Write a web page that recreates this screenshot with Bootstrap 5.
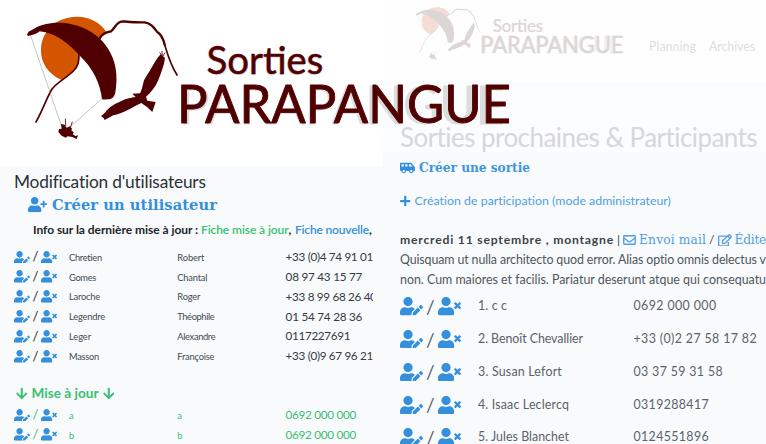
<!DOCTYPE html>
<html lang="fr">
<head>
<meta charset="utf-8">
<meta name="viewport" content="width=device-width, initial-scale=1">
<title>Sorties Parapangue</title>
<link href="https://cdn.jsdelivr.net/npm/bootstrap@5.3.0/dist/css/bootstrap.min.css" rel="stylesheet">
<style>
  body { width: 766px; height: 444px; background: #f8fafc; color: #212529; font-family: Lato, "Noto Sans", sans-serif; line-height: 1; }
  svg { display: block; flex: none; }
  a, .tint { color: #3490dc; }
  .leaf { color: #38c172; }
  .slab { font-family: "DejaVu Serif", serif; }
  .admin { width: 383px; }
  .admin-top { height: 166px; }
  .admin-body { width: 372.5px; padding-left: 14px; }
  .admin-title { height: 31px; padding-top: 2px; font-size: 17.3px; font-weight: 400; color: #2b3035; }
  .admin-new { height: 16px; padding-left: 14px; font-size: 14.6px; gap: 5px; }
  .admin-info { height: 34px; padding-left: 19px; font-size: 12px; font-weight: 700; }
  .admin-info a, .admin-info .leaf { font-weight: 600; }
  .person { height: 19.85px; }
  .person .tools { width: 55px; font-size: 13px; gap: 2.5px; }
  .person .name { width: 108.3px; padding-top: 1px; font-size: 9.3px; color: #444a50; }
  .person .phone { font-size: 11.7px; color: #343a40; }
  .person .name.leaf, .person .phone.leaf { color: #38c172; }
  .admin-sub { height: 24px; margin: 15px 0 0; padding-left: 2px; font-size: 13.6px; font-weight: 700; gap: 4px; }
  .trips { width: 383px; }
  .trips-top { height: 82px; background: #fefefe; color: #dddfe0; font-size: 12.4px; }
  .trips-top nav { padding: 41px 11px 0 0; gap: 13px; }
  .trips-hero { height: 70px; background: #fbfcfd; padding: 41px 0 0 17px; }
  .trips-hero h2 { font-size: 26px; font-weight: 400; color: #d5d7d9; line-height: 28px; }
  .trips-body { padding-left: 17px; }
  .trips-body a { color: #4f9fe1; }
  .trips-body .trips-new a { color: #3f95de; }
  .trips-new { height: 32px; font-size: 12.2px; }
  .trips-add { height: 34px; font-size: 12.3px; }
  .trips-date { height: 40px; padding-top: 4px; font-size: 12.2px; color: #3d4246; gap: 3px; }
  .trips-date a { gap: 3px; }
  .trips-text { font-size: 12.4px; line-height: 19.5px; color: #50565b; margin-top: -8px; height: 40px; }
  .guest { height: 32.8px; font-size: 12.4px; color: #5c6268; }
  .guest .tools { width: 78px; font-size: 19px; gap: 3px; }
  .guest .name { width: 155.5px; }
  .brand { left: 0; top: 0; z-index: 2; --ink: #500000; --sun: #d45500; --line: #888; --cast: #dcdcdc; }
  .brand-faded { left: 21.4px; top: 0; --ink: #dcd7d6; --sun: #f5dcd7; --line: #e6e6e6; --cast: #f0efef; }
</style>
<script src="https://cdn.jsdelivr.net/npm/bootstrap@5.3.0/dist/js/bootstrap.bundle.min.js"></script>
</head>
<body class="overflow-hidden position-relative m-0">

<svg width="0" height="0" class="position-absolute">
  <defs>
    <symbol id="i-edit-user" viewBox="0 0 640 512"><path fill="currentColor" d="M224 256c70.7 0 128-57.3 128-128S294.7 0 224 0 96 57.3 96 128s57.3 128 128 128zm89.6 32h-16.7c-22.2 10.2-46.9 16-72.9 16s-50.6-5.8-72.9-16h-16.7C60.2 288 0 348.2 0 422.4V464c0 26.5 21.5 48 48 48h274.9c-2.4-6.8-3.4-14-2.6-21.3l6.8-60.9 1.2-11.1 7.9-7.9 77.3-77.3c-24.5-27.7-60-45.5-99.9-45.5zm45.3 145.3l-6.8 61c-1.1 10.2 7.5 18.8 17.6 17.6l60.9-6.8 137.9-137.9-71.7-71.7-137.9 137.8zM633 268.9L595.1 231c-9.3-9.3-24.5-9.3-33.8 0l-37.8 37.8-4.1 4.1 71.8 71.7 41.8-41.8c9.3-9.4 9.3-24.5 0-33.9z"/></symbol>
    <symbol id="i-drop-user" viewBox="0 0 640 512"><path fill="currentColor" d="M589.6 240l45.6-45.6c6.3-6.3 6.3-16.5 0-22.8l-22.8-22.8c-6.3-6.3-16.5-6.3-22.8 0L544 194.4l-45.6-45.6c-6.3-6.3-16.5-6.3-22.8 0l-22.8 22.8c-6.3 6.3-6.3 16.5 0 22.8l45.6 45.6-45.6 45.6c-6.3 6.3-6.3 16.5 0 22.8l22.8 22.8c6.3 6.3 16.5 6.3 22.8 0l45.6-45.6 45.6 45.6c6.3 6.3 16.5 6.3 22.8 0l22.8-22.8c6.3-6.3 6.3-16.5 0-22.8L589.6 240zM224 256c70.7 0 128-57.3 128-128S294.7 0 224 0 96 57.3 96 128s57.3 128 128 128zm89.6 32h-16.7c-22.2 10.2-46.9 16-72.9 16s-50.6-5.8-72.9-16h-16.7C60.2 288 0 348.2 0 422.4V464c0 26.5 21.5 48 48 48h352c26.5 0 48-21.5 48-48v-41.6c0-74.2-60.2-134.4-134.4-134.4z"/></symbol>
    <symbol id="i-add-user" viewBox="0 0 640 512"><path fill="currentColor" d="M624 208h-64v-64c0-8.8-7.2-16-16-16h-32c-8.8 0-16 7.2-16 16v64h-64c-8.8 0-16 7.2-16 16v32c0 8.8 7.2 16 16 16h64v64c0 8.8 7.2 16 16 16h32c8.8 0 16-7.2 16-16v-64h64c8.8 0 16-7.2 16-16v-32c0-8.8-7.2-16-16-16zm-400 48c70.7 0 128-57.3 128-128S294.7 0 224 0 96 57.3 96 128s57.3 128 128 128zm89.6 32h-16.7c-22.2 10.2-46.9 16-72.9 16s-50.6-5.8-72.9-16h-16.7C60.2 288 0 348.2 0 422.4V464c0 26.5 21.5 48 48 48h352c26.5 0 48-21.5 48-48v-41.6c0-74.2-60.2-134.4-134.4-134.4z"/></symbol>
    <symbol id="i-down" viewBox="0 0 448 512"><path fill="currentColor" d="M413.1 222.5l22.2 22.2c9.4 9.4 9.4 24.6 0 33.9L241 473c-9.4 9.4-24.6 9.4-33.9 0L12.7 278.6c-9.4-9.4-9.4-24.6 0-33.9l22.2-22.2c9.5-9.5 25-9.3 34.3.4L184 343.4V56c0-13.3 10.7-24 24-24h32c13.3 0 24 10.7 24 24v287.4l114.8-120.5c9.3-9.8 24.8-10 34.3-.4z"/></symbol>
    <symbol id="i-plus" viewBox="0 0 448 512"><path fill="currentColor" d="M416 208H272V64c0-17.7-14.3-32-32-32h-32c-17.7 0-32 14.3-32 32v144H32c-17.7 0-32 14.3-32 32v32c0 17.7 14.3 32 32 32h144v144c0 17.7 14.3 32 32 32h32c17.7 0 32-14.3 32-32V304h144c17.7 0 32-14.3 32-32v-32c0-17.7-14.3-32-32-32z"/></symbol>
    <symbol id="i-van" viewBox="0 0 640 512"><path fill="currentColor" d="M628.88 210.65L494.39 49.27A48.01 48.01 0 0 0 457.52 32H32C14.33 32 0 46.33 0 64v288c0 17.67 14.33 32 32 32h32c0 53.02 42.98 96 96 96s96-42.98 96-96h128c0 53.02 42.98 96 96 96s96-42.98 96-96h32c17.67 0 32-14.33 32-32V241.38c0-11.23-3.94-22.1-11.12-30.73zM64 192V96h96v96H64zm96 240c-26.51 0-48-21.49-48-48s21.49-48 48-48 48 21.49 48 48-21.49 48-48 48zm160-240h-96V96h96v96zm160 240c-26.51 0-48-21.49-48-48s21.49-48 48-48 48 21.49 48 48-21.49 48-48 48zm-96-240V96h66.02l80 96H384z"/></symbol>
    <symbol id="i-mail" viewBox="0 0 26 20"><g fill="none" stroke="currentColor" stroke-width="2.8" stroke-linejoin="round"><rect x="1.5" y="1.5" width="23" height="17" rx="1.5"/><path d="M2 6l9 7q2 1.5 4 0l9-7"/></g></symbol>
    <symbol id="i-pen" viewBox="0 0 576 512"><g fill="none" stroke="currentColor" stroke-width="54" stroke-linejoin="round" stroke-linecap="round"><path d="M340 90H50q-22 0-22 26v346q0 22 22 22h348q26 0 26-26V340"/><path d="M190 280L440 40q20-18 40 0l56 56q18 20 0 40L296 376l-110 14zM400 75l100 100"/></g></symbol>
    <symbol id="logo" viewBox="0 0 520 150">
      <g transform="scale(.33333)">
        <path fill="var(--sun)" d="M185 240C146 223 122 190 123 150C124 91 171 50 231 50C267 50 300 67 318 94L300 115L236 165Q238 193 222 213Z"/>
        <g fill="none" stroke="var(--ink)" stroke-linecap="round" stroke-linejoin="round">
          <path stroke-width="7" d="M300 114C308 98 321 97 333 94C347 83 348 65 368 64C393 66 415 68 434 67C455 71 462 83 471 95C487 105 491 120 494 134"/>
          <path stroke-width="5" d="M494 134C503 163 510 191 531 225"/>
          <path stroke-width="5" d="M237 163C237 182 236 198 220 213C200 234 176 243 156 267C138 298 129 329 108 366"/>
        </g>
        <path fill="none" stroke="var(--line)" stroke-width="1.5" d="M91 104L185 380M307 295L214 377"/>
        <g fill="var(--ink)">
          <path d="M81 104Q84 94 94 91C123 71 158 66 192 69C263 76 316 117 338 173C351 207 352 242 346 277C342 298 330 300 306 298C301 248 277 203 240 168C203 128 164 98 119 94Q109 104 84 108Z"/>
          <path d="M482 163L495 174C493 194 484 216 475 240C466 262 452 278 438 290L442 302L467 306L457 336L442 322L424 309C399 320 368 342 340 346L314 360L310 353L303 349L316 337C325 322 344 312 364 303C380 295 394 292 407 291L397 281L420 280C430 262 427 245 438 230C451 212 460 192 474 172Z"/>
          <path d="M183 372L194 374L200 383L210 379L216 386L214 391L222 398L218 402L226 408L235 406L229 417L217 411L203 409L197 413L185 407L175 396L177 387L185 386Z"/>
        </g>
        <path fill="none" stroke="var(--ink)" stroke-width="2.5" d="M479 157L487 170L486 153M495 158L488 170M196 356L197 378M217 365L211 384"/>
      </g>
      <g font-family="Lato, sans-serif" font-weight="400" stroke-linejoin="round">
        <g fill="var(--cast)" stroke="var(--cast)" stroke-width=".5"><text x="208" y="75" font-size="38.5" textLength="114" lengthAdjust="spacingAndGlyphs">Sorties</text><text x="179.5" y="124" font-size="51.5" stroke-width=".9" textLength="325" lengthAdjust="spacingAndGlyphs">PARAPANGUE</text></g>
        <g fill="var(--ink)" stroke="var(--ink)" stroke-width=".5"><text x="206.5" y="73.5" font-size="38.5" textLength="117" lengthAdjust="spacingAndGlyphs">Sorties</text><text x="177" y="122.9" font-size="51.5" stroke-width=".9" textLength="334" lengthAdjust="spacingAndGlyphs">PARAPANGUE</text></g>
      </g>
    </symbol>
  </defs>
</svg>

<svg class="brand position-absolute" width="520" height="150"><use href="#logo"/></svg>

<main class="d-flex h-100">
  <section class="admin flex-shrink-0">
    <div class="admin-top bg-white"></div>
    <div class="admin-body overflow-hidden text-nowrap">
      <h1 class="admin-title d-flex align-items-center m-0"><span data-w="192">Modification d'utilisateurs</span></h1>
      <div class="admin-new tint d-flex align-items-center fw-bold">
        <svg width="19" height="15.2"><use href="#i-add-user"/></svg>
        <a href="#" class="slab text-decoration-none" data-w="165">Créer un utilisateur</a>
      </div>
      <div class="admin-info d-flex align-items-center"><span data-w="168">Info sur la dernière mise à jour :&nbsp;</span><span class="leaf" data-w="87.5">Fiche mise à jour</span><span data-w="6.5">,&nbsp;</span><a href="#" class="text-decoration-none" data-w="74">Fiche nouvelle</a><span>,</span></div>
      <div id="users"></div>
      <h2 class="admin-sub leaf d-flex align-items-center"><svg width="11.5" height="13"><use href="#i-down"/></svg><span data-w="67">Mise à jour</span><svg width="11.5" height="13"><use href="#i-down"/></svg></h2>
      <div id="updates" class="leaf"></div>
    </div>
  </section>

  <section class="trips flex-shrink-0 overflow-hidden text-nowrap">
    <header class="trips-top position-relative">
      <svg class="brand-faded position-absolute" width="223.6" height="64.5" viewBox="0 0 520 150"><use href="#logo" width="520" height="150"/></svg>
      <nav class="d-flex justify-content-end"><span data-w="47">Planning</span><span data-w="46">Archives</span></nav>
    </header>
    <div class="trips-hero"><h2 class="m-0"><span data-w="358">Sorties prochaines &amp; Participants</span></h2></div>
    <div class="trips-body">
      <div class="trips-new tint d-flex align-items-center fw-bold"><svg width="15" height="12"><use href="#i-van"/></svg><a href="#" class="slab text-decoration-none ms-1" data-w="111">Créer une sortie</a></div>
      <div class="trips-add tint d-flex align-items-center"><svg width="10.5" height="12"><use href="#i-plus"/></svg><a href="#" class="text-decoration-none ms-1" data-w="257">Création de participation (mode administrateur)</a></div>
      <div class="trips-date d-flex align-items-center"><b data-w="214">mercredi 11 septembre , montagne</b><span>|</span><a href="#" class="d-flex align-items-center text-decoration-none slab"><svg width="13" height="10"><use href="#i-mail"/></svg><span data-w="67">Envoi mail</span></a><span>/</span><a href="#" class="d-flex align-items-center text-decoration-none slab"><svg width="14" height="12.5"><use href="#i-pen"/></svg><span data-w="31.5">Édite</span></a></div>
      <div class="trips-text"><span data-w="366">Quisquam ut nulla architecto quod error. Alias optio omnis delectus v</span><br><span data-w="366">non. Cum maiores et facilis. Pariatur deserunt atque qui consequatu</span></div>
      <div id="guests"></div>
    </div>
  </section>
</main>

<script>
  // Rows: last name, width, first name, width, phone, width
  const users = [
    ['Chretien', 33, 'Robert', 27, '+33 (0)4 74 91 01', 87.3],
    ['Gomes', 27, 'Chantal', 30, '08 97 43 15 77', 76.5],
    ['Laroche', 31, 'Roger', 23, '+33 8 99 68 26 40', 91],
    ['Legendre', 36, 'Théophile', 37, '01 54 74 28 36', 76.5],
    ['Leger', 22, 'Alexandre', 38, '0117227691', 64.5],
    ['Masson', 30, 'Françoise', 37, '+33 (0)9 67 96 21', 87.3]
  ];
  const updates = [['a', 5, 'a', 5, '0692 000 000', 70.5], ['b', 5, 'b', 5, '0692 000 000', 70.5]];
  const guests = [
    ['1. c c', 29, '0692 000 000', 83],
    ['2. Benoît Chevallier', 105, '+33 (0)2 27 58 17 82', 123.5],
    ['3. Susan Lefort', 84, '03 37 59 31 58', 89.5],
    ['4. Isaac Leclercq', 91, '0319288417', 75.5],
    ['5. Jules Blanchet', 91, '0124551896', 75.5]
  ];
  const icon = (id, w) => `<svg class="tint" width="${w}" height="${w * .8}"><use href="#${id}"/></svg>`;
  const tools = w => `<div class="tools d-flex align-items-center flex-shrink-0">${icon('i-edit-user', w)}<span>/</span>${icon('i-drop-user', w)}</div>`;
  const cell = (cls, text, w) => `<div class="${cls} flex-shrink-0"><span data-w="${w}">${text}</span></div>`;
  const person = (r, tone) => `<div class="person d-flex align-items-center">${tools(16)}${cell('name ' + tone, r[0], r[1])}${cell('name ' + tone, r[2], r[3])}${cell('phone ' + tone, r[4], r[5])}</div>`;
  document.getElementById('users').innerHTML = users.map(r => person(r, '')).join('');
  document.getElementById('updates').innerHTML = updates.map(r => person(r, 'leaf')).join('');
  document.getElementById('guests').innerHTML = guests.map(r =>
    `<div class="guest d-flex align-items-center">${tools(23)}${cell('name', r[0], r[1])}${cell('phone', r[2], r[3])}</div>`).join('');

  document.querySelectorAll('[data-w]').forEach(el => {
    const range = document.createRange();
    range.selectNodeContents(el);
    const delta = el.dataset.w - range.getBoundingClientRect().width;
    el.style.letterSpacing = (delta / el.textContent.length).toFixed(3) + 'px';
  });
</script>
</body>
</html>
